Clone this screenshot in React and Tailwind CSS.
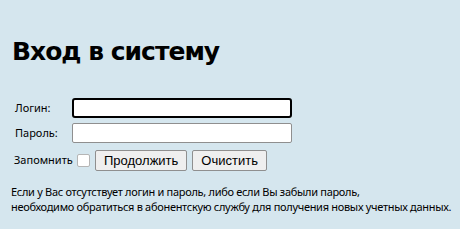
export default function App() {
  return (
    <div className="w-[460px] h-[229px] bg-[#d5e6ee] pl-[12px] pt-[36px] font-['Noto_Sans','DejaVu_Sans',sans-serif] text-black">
      <h1 className="text-[25px] leading-[32px] font-bold font-['DejaVu_Sans',sans-serif] tracking-[-1px]">Вход в систему</h1>

      <div className="mt-[30px] flex flex-col gap-[5px] text-[11px]">
        <div className="flex items-center h-[20px]">
          <label className="w-[60px] pl-[3px]">Логин:</label>
          <input
            autoFocus
            type="text"
            className="w-[220px] h-[20px] bg-white border-2 border-black rounded-[3px] outline-none"
          />
        </div>
        <div className="flex items-center h-[20px]">
          <label className="w-[60px] pl-[3px]">Пароль:</label>
          <input type="password" className="w-[220px] h-[20px] bg-white border border-[#8f8f8f] rounded-[2px]" />
        </div>
        <div className="flex items-center h-[22px] mt-[1px]">
          <label className="w-[65px] pl-[2px]">Запомнить</label>
          <span className="w-[13px] h-[13px] bg-white border border-[#b5b5b5] rounded-[2px] mr-[5px]"></span>
          <button className="h-[21px] px-[8px] bg-[#efefef] border border-[#8f8f8f] rounded-[2px] text-[13px] font-['Liberation_Sans',sans-serif]">Продолжить</button>
          <button className="h-[21px] ml-[5px] px-[8px] bg-[#efefef] border border-[#8f8f8f] rounded-[2px] text-[13px] font-['Liberation_Sans',sans-serif]">Очистить</button>
        </div>
      </div>

      <p className="mt-[13px] text-[11px] leading-[15px] -ml-[1px] whitespace-nowrap tracking-[-0.3px]">
        Если у Вас отсутствует логин и пароль, либо если Вы забыли пароль,
        <br />
        необходимо обратиться в абонентскую службу для получения новых учетных данных.
      </p>
    </div>
  );
}
